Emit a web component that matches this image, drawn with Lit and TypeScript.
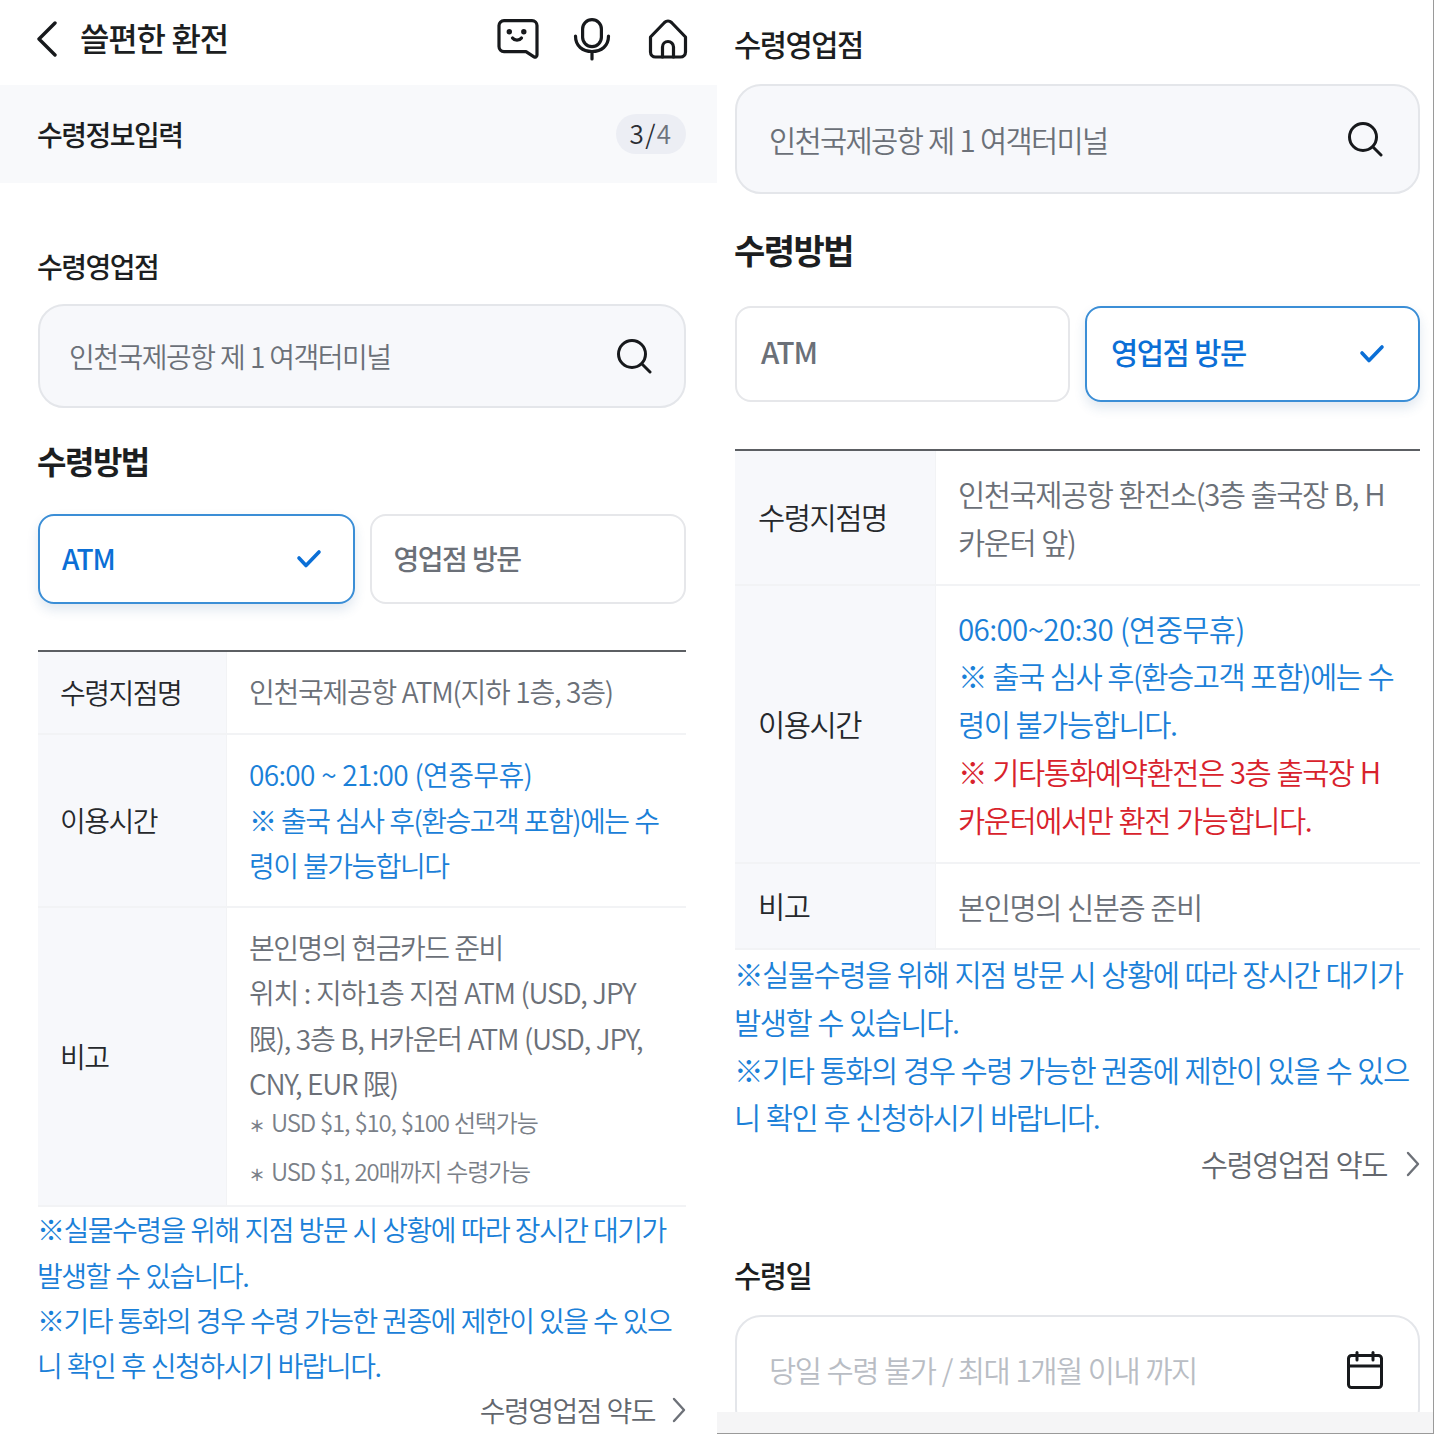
import { LitElement, html, css, nothing } from 'lit';
import { customElement } from 'lit/decorators.js';

const chevron = (points: string, w: number, h: number, vb: string, stroke: string, sw: number) => html`
  <svg width=${w} height=${h} viewBox=${vb} fill="none" stroke=${stroke} stroke-width=${sw} stroke-linecap="round" stroke-linejoin="round">
    <polyline points=${points}></polyline>
  </svg>`;

const searchIcon = html`
  <svg class="field-icon" viewBox="0 0 36 36" fill="none" stroke="#17191c" stroke-width="3" stroke-linecap="round">
    <circle cx="16" cy="16" r="13.5"></circle>
    <line x1="26" y1="26" x2="34" y2="34"></line>
  </svg>`;

const calendarIcon = html`
  <svg class="field-icon cal" viewBox="0 0 36 38" fill="none" stroke="#17191c" stroke-width="3" stroke-linejoin="round" stroke-linecap="round">
    <rect x="1.5" y="4.500" width="33" height="32" rx="3"></rect>
    <line x1="1.5" y1="15" x2="34.5" y2="15"></line>
    <line x1="10" y1="1.5" x2="10" y2="9"></line>
    <line x1="26" y1="1.5" x2="26" y2="9"></line>
  </svg>`;

const check = html`
  <svg class="check" viewBox="0 0 26 20" fill="none" stroke="#0b6fd6" stroke-width="3.6" stroke-linecap="round" stroke-linejoin="round">
    <polyline points="3,9 10,16.5 23,3"></polyline>
  </svg>`;

@customElement('app-root')
export class AppRoot extends LitElement {
  static styles = css`
    :host {
      display: block;
      width: 1434px;
      height: 1434px;
      overflow: hidden;
      background: #fff;
      font-family: "Noto Sans CJK KR", "Noto Sans", sans-serif;
      color: #1c1e21;
    }
    .page {
      display: grid;
      grid-template-columns: 717px 717px;
      height: 1434px;
    }
    .panel {
      position: relative;
      height: 1434px;
      box-sizing: border-box;
      overflow: hidden;
      word-spacing: 0.8px;
    }

    /* left panel sizes, right panel is the same screen a bit bigger */
    .left {
      --fs: 28px;
      --ls: -1.5px;
      --lh: 45.3px;
      --notes-lh: 45.3px;
      --pad-l: 38px;
      --pad-r: 31px;
      --field-h: 104px;
      --field-pad: 30px;
      --btn-h: 90px;
      --btn-gap: 15px;
      --btn-pad: 22px;
      --btn-shift: 2px;
      --col: 188px;
      --cell-pad: 22px;
      --td-pad: 22px;
      --title: 32px;
    }
    .right {
      --fs: 29.6px;
      --ls: -1.5px;
      --lh: 47.8px;
      --notes-lh: 47.6px;
      --pad-l: 18px;
      --pad-r: 13px;
      --field-h: 110px;
      --field-pad: 33px;
      --btn-h: 96px;
      --btn-gap: 15px;
      --btn-pad: 24px;
      --btn-shift: 5px;
      --col: 200px;
      --cell-pad: 23px;
      --td-pad: 22px;
      --title: 34px;
      word-spacing: 1px;
      border-right: 1px solid #9a9a9a;
    }

    header {
      height: 85px;
      display: flex;
      align-items: center;
      padding: 0 29px 7px 36px;
      box-sizing: border-box;
    }
    header h1 {
      margin: -4px 0 0 22px;
      flex: 1;
      font-size: 32px;
      font-weight: 500;
      letter-spacing: -1.2px;
      line-height: 40px;
    }
    .top-icons {
      display: flex;
      align-items: center;
      gap: 34px;
    }
    .top-icons .mic {
      margin-right: 3px;
    }
    .step-band {
      height: 98px;
      background: #f8f9fb;
      display: flex;
      align-items: center;
      justify-content: space-between;
      padding: 0 31px 0 37px;
    }
    .step-band h2 {
      margin: 0;
      font-size: 28px;
      font-weight: 500;
      letter-spacing: -1.5px;
    }
    .badge {
      width: 70px;
      height: 40px;
      box-sizing: border-box;
      padding-bottom: 3px;
      border-radius: 20px;
      background: #eceef4;
      display: flex;
      align-items: center;
      justify-content: center;
      font-size: 26px;
      font-weight: 350;
      letter-spacing: 1.5px;
      color: #2a2d33;
    }
    .badge span {
      color: #6e737c;
    }

    .body {
      padding: 0 var(--pad-r) 0 var(--pad-l);
    }
    .left .body {
      padding-top: 63px;
    }
    .right .body {
      padding-top: 24px;
    }
    .label {
      margin: 0 0 0 -1px;
      font-size: var(--fs);
      font-weight: 500;
      letter-spacing: var(--ls);
      line-height: 40px;
    }
    .field {
      margin-top: 18px;
      height: var(--field-h);
      box-sizing: border-box;
      border: 2px solid #e4e6ea;
      border-radius: 26px;
      background: #f7f8fb;
      display: flex;
      align-items: center;
      justify-content: space-between;
      padding: 0 calc(var(--field-pad) + 2px) 0 calc(var(--field-pad) - 1px);
      font-size: var(--fs);
      letter-spacing: var(--ls);
      color: #6b7078;
      font-weight: 350;
    }
    .right .field {
      margin-top: 20px;
      letter-spacing: -1.7px;
    }
    .field-icon {
      width: 36px;
      height: 36px;
      flex: none;
    }
    .field-icon.cal {
      height: 38px;
      margin-top: 3px;
    }
    .method {
      margin: 30px 0 0 -1px;
      font-size: var(--title);
      font-weight: 600;
      letter-spacing: var(--ls);
      line-height: 44px;
    }
    .right .method {
      margin-top: 34px;
    }
    .buttons {
      margin-top: 32px;
      display: grid;
      grid-template-columns: 1fr 1fr;
      gap: var(--btn-gap);
    }
    .right .buttons {
      margin-top: 34px;
    }
    .btn {
      height: var(--btn-h);
      box-sizing: border-box;
      border: 2px solid #e6e7ea;
      border-radius: 16px;
      display: flex;
      align-items: center;
      justify-content: space-between;
      padding: 0 var(--btn-pad) var(--btn-shift);
      font-size: var(--fs);
      font-weight: 500;
      letter-spacing: var(--ls);
      color: #6b7078;
    }
    .btn.on {
      border-color: #3b8ed6;
      color: #0b6fd6;
      box-shadow: 0 6px 12px rgba(40, 90, 150, 0.14);
    }
    .btn .atm {
      letter-spacing: -1px;
    }
    .check {
      width: 26px;
      height: 20px;
      margin: var(--btn-shift) 9px 0 0;
    }

    .table {
      margin-top: 46px;
      border-top: 2px solid #5c5f63;
    }
    .right .table {
      margin-top: 47px;
    }
    .row {
      display: grid;
      grid-template-columns: var(--col) 1fr;
      border-bottom: 2px solid #f2f3f5;
      font-size: var(--fs);
      letter-spacing: var(--ls);
      line-height: var(--lh);
    }
    .row > .th {
      background: #f7f8fb;
      padding-left: var(--cell-pad);
      display: flex;
      align-items: center;
      color: #26282c;
      font-weight: 350;
    }
    .row > .td {
      padding: 17px 0 19px var(--td-pad);
      color: #6b7078;
      font-weight: 350;
      white-space: nowrap;
      border-left: 1px solid #f2f3f5;
    }
    .left .row > .td.blue {
      padding-bottom: 18px;
    }
    .right .row > .td {
      padding: 19px 0 18px var(--td-pad);
    }
    .row > .td.blue {
      color: #1a80d8;
    }
    .red {
      color: #d8222c;
    }
    .wide {
      letter-spacing: -1.25px;
    }
    .time {
      letter-spacing: -0.65px;
    }
    .small {
      font-size: 24px;
      letter-spacing: -1.15px;
      line-height: 49px;
      margin: -9px 0;
      color: #7a8088;
    }
    .star {
      display: inline-block;
      width: 22px;
      font-size: 16px;
      font-weight: 700;
      line-height: 1;
      letter-spacing: 0;
    }
    .notes {
      margin: 0 0 0 -1px;
      font-size: var(--fs);
      letter-spacing: var(--ls);
      line-height: var(--notes-lh);
      color: #1a80d8;
      font-weight: 350;
      white-space: nowrap;
    }
    .link {
      display: flex;
      justify-content: flex-end;
      align-items: center;
      gap: 17px;
      font-size: var(--fs);
      letter-spacing: var(--ls);
      line-height: 42px;
      color: #63676e;
      font-weight: 350;
    }
    .right .link {
      margin-top: 2px;
      gap: 19px;
    }
    .right .field.date {
      background: #fff;
      height: 120px;
      color: #b9bdc4;
      align-items: flex-start;
      padding-top: 31px;
      letter-spacing: var(--ls);
    }
    .right .date-label {
      margin-top: 70px;
    }
    .tabbar {
      position: absolute;
      left: 0;
      right: 0;
      bottom: 0;
      height: 22px;
      box-sizing: border-box;
      background: #f5f5f6;
      border-bottom: 1px solid #9a9a9a;
    }
  `;

  private fieldBlock(labelText: string) {
    return html`
      <h3 class="label">${labelText}</h3>
      <div class="field">인천국제공항 제 1 여객터미널 ${searchIcon}</div>
    `;
  }

  private methodBlock(atmOn: boolean) {
    return html`
      <h3 class="method">수령방법</h3>
      <div class="buttons">
        <div class="btn ${atmOn ? 'on' : ''}"><span class="atm">ATM</span> ${atmOn ? check : nothing}</div>
        <div class="btn ${atmOn ? '' : 'on'}">영업점 방문 ${atmOn ? nothing : check}</div>
      </div>
    `;
  }

  private link() {
    return html`<div class="link">
      수령영업점 약도
      ${chevron('2,2 12,13 2,24', 14, 26, '0 0 14 26', '#6d7178', 2.4)}
    </div>`;
  }

  private notes() {
    return html`<p class="notes">※실물수령을 위해 지점 방문 시 상황에 따라 장시간 대기가<br />발생할 수 있습니다.<br />※기타 통화의 경우 수령 가능한 권종에 제한이 있을 수 있으<br />니 확인 후 신청하시기 바랍니다.</p>`;
  }

  private leftPanel() {
    return html`
      <section class="panel left">
        <header>
          ${chevron('19,2 3,18 19,34', 22, 36, '0 0 22 36', '#17191c', 3.4)}
          <h1>쓸편한 환전</h1>
          <div class="top-icons">
            <svg width="42" height="41" viewBox="0 0 42 41" fill="none" stroke="#17191c" stroke-width="3.2" stroke-linecap="round" stroke-linejoin="round">
              <path d="M7 1.600H35a5 5 0 0 1 5 5V36a2 2 0 0 1-3 1.800L29 32.600H7a5 5 0 0 1-5-5V6.600a5 5 0 0 1 5-5z"></path>
              <path d="M15.500 19c2 2.800 7 2.800 9 0"></path>
              <circle cx="12.300" cy="12.700" r="1.100" fill="#17191c"></circle>
              <circle cx="26.800" cy="12.700" r="1.100" fill="#17191c"></circle>
            </svg>
            <svg class="mic" width="38" height="44" viewBox="0 0 38 44" fill="none" stroke="#17191c" stroke-width="3.2" stroke-linecap="round">
              <rect x="9.600" y="2.600" width="18.800" height="27" rx="9.400"></rect>
              <path d="M2.500 19c0 10 7 15.500 16.500 15.500S35.500 29 35.500 19"></path>
              <line x1="19" y1="35" x2="19" y2="42"></line>
            </svg>
            <svg width="40" height="40" viewBox="0 0 40 40" fill="none" stroke="#17191c" stroke-width="3.2" stroke-linejoin="round" stroke-linecap="round">
              <path d="M2.500 18 16.500 3.500a5 5 0 0 1 7 0L37.500 18V33a5 5 0 0 1-5 5H7.500a5 5 0 0 1-5-5z"></path>
              <path d="M14.500 38V28a5.500 5.500 0 0 1 11 0v10"></path>
            </svg>
          </div>
        </header>
        <div class="step-band">
          <h2>수령정보입력</h2>
          <div class="badge">3/<span>4</span></div>
        </div>
        <div class="body">
          ${this.fieldBlock('수령영업점')}
          ${this.methodBlock(true)}
          <div class="table">
            <div class="row">
              <div class="th">수령지점명</div>
              <div class="td"><span class="wide">인천국제공항 ATM(지하 1층, 3층)</span></div>
            </div>
            <div class="row">
              <div class="th">이용시간</div>
              <div class="td blue"><span class="time">06:00 ~ 21:00 (연중무휴)</span><br />※ 출국 심사 후(환승고객 포함)에는 수<br />령이 불가능합니다</div>
            </div>
            <div class="row">
              <div class="th">비고</div>
              <div class="td">
                본인명의 현금카드 준비<br /><span class="wide">위치 : 지하1층 지점 ATM (USD, JPY<br />限), 3층 B, H카운터 ATM (USD, JPY,<br />CNY, EUR 限)</span>
                <div class="small"><span class="star">＊</span>USD $1, $10, $100 선택가능<br /><span class="star">＊</span>USD $1, 20매까지 수령가능</div>
              </div>
            </div>
          </div>
          ${this.notes()}
          ${this.link()}
        </div>
      </section>
    `;
  }

  private rightPanel() {
    return html`
      <section class="panel right">
        <div class="body">
          ${this.fieldBlock('수령영업점')}
          ${this.methodBlock(false)}
          <div class="table">
            <div class="row">
              <div class="th">수령지점명</div>
              <div class="td">인천국제공항 환전소(3층 출국장 B, H<br />카운터 앞)</div>
            </div>
            <div class="row">
              <div class="th">이용시간</div>
              <div class="td blue"><span class="time">06:00~20:30 (연중무휴)</span><br />※ 출국 심사 후(환승고객 포함)에는 수<br />령이 불가능합니다.<br /><span class="red">※ 기타통화예약환전은 3층 출국장 H<br />카운터에서만 환전 가능합니다.</span></div>
            </div>
            <div class="row">
              <div class="th">비고</div>
              <div class="td">본인명의 신분증 준비</div>
            </div>
          </div>
          ${this.notes()}
          ${this.link()}
          <h3 class="label date-label">수령일</h3>
          <div class="field date">당일 수령 불가 / 최대 1개월 이내 까지 ${calendarIcon}</div>
        </div>
        <div class="tabbar"></div>
      </section>
    `;
  }

  render() {
    return html`<div class="page">${this.leftPanel()}${this.rightPanel()}</div>`;
  }
}
